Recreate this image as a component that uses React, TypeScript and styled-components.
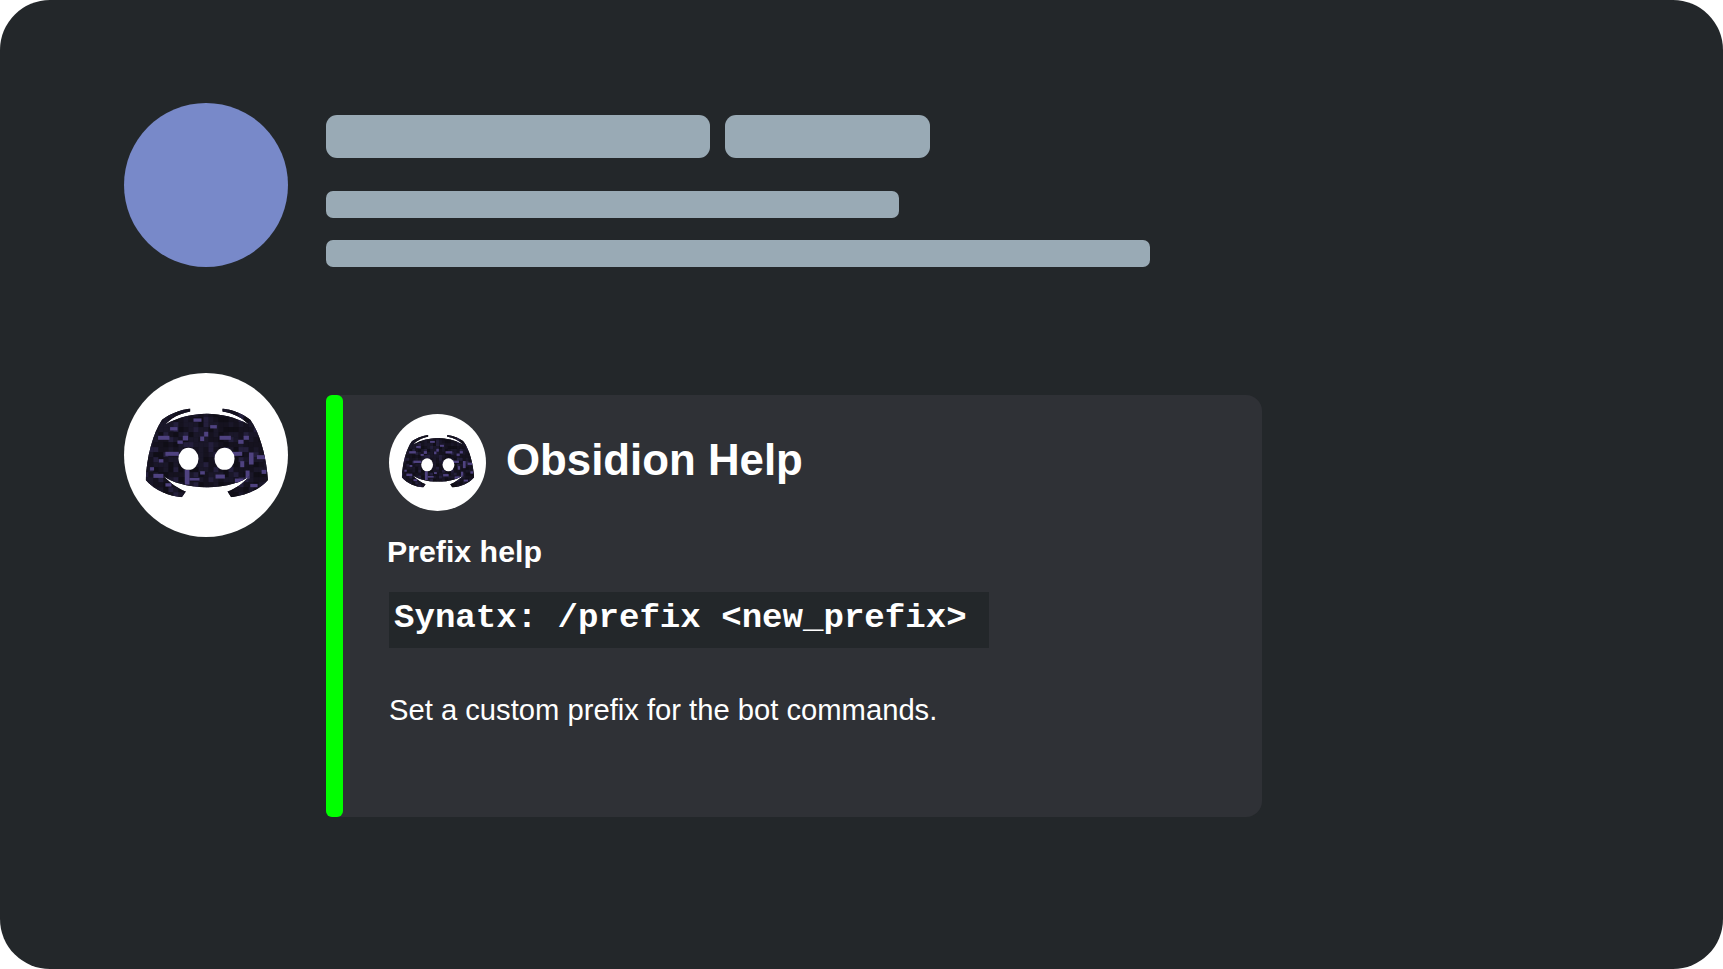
import React, { useId } from "react";
import styled, { createGlobalStyle } from "styled-components";

const GlobalStyle = createGlobalStyle`
  html, body {
    margin: 0;
    padding: 0;
    background: #ffffff;
  }
`;

const Page = styled.div`
  width: 1723px;
  height: 969px;
  box-sizing: border-box;
  padding: 103px 0 0 124px;
  background: #23272a;
  border-radius: 50px;
  font-family: "Liberation Sans", Arial, sans-serif;
  color: #ffffff;
  overflow: hidden;
`;

const Message = styled.div`
  display: flex;
  gap: 38px;
  margin-bottom: 106px;
`;

const Avatar = styled.div<{ $bg: string; $size: number }>`
  flex: none;
  width: ${(p) => p.$size}px;
  height: ${(p) => p.$size}px;
  border-radius: 50%;
  background: ${(p) => p.$bg};
  overflow: hidden;
`;

const Lines = styled.div`
  padding-top: 12px;
  display: flex;
  flex-direction: column;
`;

const NameRow = styled.div`
  display: flex;
  gap: 15px;
  margin-bottom: 33px;
`;

const Bar = styled.div<{ $w: number; $h: number; $r: number }>`
  width: ${(p) => p.$w}px;
  height: ${(p) => p.$h}px;
  border-radius: ${(p) => p.$r}px;
  background: #99aab5;
`;

const Gap = styled.div`
  height: 22px;
`;

const Embed = styled.div`
  display: flex;
  width: 936px;
  height: 422px;
  margin-top: 22px;
  background: #2f3136;
  border-radius: 6px 16px 16px 6px;
`;

const Stripe = styled.div`
  flex: none;
  width: 17px;
  background: #00ff00;
  border-radius: 6px;
`;

const EmbedBody = styled.div`
  flex: 1;
  padding: 19px 0 0 46px;
`;

const EmbedHead = styled.div`
  display: flex;
  align-items: center;
  gap: 20px;
`;

const Title = styled.div`
  font-size: 43.8px;
  font-weight: 700;
  line-height: 50px;
  margin-top: -6px;
`;

const Subtitle = styled.div`
  font-size: 30.3px;
  font-weight: 700;
  line-height: 36px;
  margin: 23px 0 0 -2px;
`;

const Code = styled.div`
  width: 600px;
  height: 56px;
  margin-top: 22px;
  padding-left: 5px;
  box-sizing: border-box;
  background: #23272a;
  font-family: "Liberation Mono", "Courier New", monospace;
  font-size: 34.1px;
  font-weight: 700;
  line-height: 52px;
  white-space: pre;
`;

const Description = styled.div`
  font-size: 29.2px;
  line-height: 36px;
  margin-top: 44px;
`;

// purple streaks of the obsidian texture, in the same units as the logo path
const streaks: [number, number, number, number][] = [
  [174, 256, 34, 12], [232, 270, 16, 10], [248, 256, 16, 14], [300, 258, 12, 14],
  [312, 244, 12, 14], [358, 256, 34, 12], [414, 268, 16, 12], [430, 256, 16, 12],
  [196, 304, 40, 12], [176, 326, 14, 10], [396, 304, 30, 12], [446, 306, 14, 36],
  [470, 314, 26, 12], [484, 358, 14, 12], [160, 370, 30, 12], [254, 358, 14, 44],
  [268, 382, 30, 8], [346, 372, 28, 12], [300, 362, 14, 10], [436, 360, 12, 24],
  [404, 384, 26, 12], [210, 230, 22, 10], [280, 204, 24, 10], [330, 224, 20, 10],
  [150, 350, 12, 10], [420, 332, 12, 18], [196, 398, 18, 10], [450, 400, 22, 10],
];

const noiseColors = ["#100e17", "#15121f", "#15121f", "#1a1729", "#1a1729", "#241f3c"];

// small fixed noise grid so the dark part of the obsidian is not flat
const noise: { x: number; y: number; c: string }[] = [];
let seed = 7;
for (let y = 170; y < 445; y += 15) {
  for (let x = 130; x < 510; x += 15) {
    seed = (seed * 16807) % 2147483647;
    noise.push({ x, y, c: noiseColors[seed % noiseColors.length] });
  }
}

const LOGO =
  "M270 174C240 178 205 192 186 208C158 250 140 320 137 388C165 420 205 435 245 440L257 423C235 415 210 398 188 375C215 395 260 410 320 410C380 410 425 395 450 375C430 398 405 415 382 423L393 440C435 435 475 420 503 388C498 320 480 250 450 208C432 192 400 178 367 174L367 183C400 188 428 203 445 222C405 200 360 190 320 190C280 190 235 200 196 222C212 203 235 190 270 183Z";

const ObsidianLogo = () => {
  const clip = useId();
  return (
    <svg width="100%" height="100%" viewBox="72 68 491 491" style={{ display: "block" }}>
      <clipPath id={clip}>
        <path d={LOGO} />
      </clipPath>
      <g clipPath={`url(#${clip})`}>
        <rect x="120" y="160" width="400" height="300" fill="#15121f" />
        {noise.map((n) => (
          <rect key={`${n.x}-${n.y}`} x={n.x} y={n.y} width="16" height="16" fill={n.c} />
        ))}
        {streaks.map(([x, y, w, h]) => (
          <rect key={`${x}-${y}`} x={x} y={y} width={w} height={h} fill="#4f4280" />
        ))}
      </g>
      <ellipse cx="265" cy="325" rx="30" ry="33" fill="#fff" />
      <ellipse cx="373" cy="325" rx="30" ry="33" fill="#fff" />
    </svg>
  );
};

export default function App() {
  return (
    <Page>
      <GlobalStyle />
      <Message>
        <Avatar $bg="#7889c9" $size={164} />
        <Lines>
          <NameRow>
            <Bar $w={384} $h={43} $r={11} />
            <Bar $w={205} $h={43} $r={11} />
          </NameRow>
          <Bar $w={573} $h={27} $r={7} />
          <Gap />
          <Bar $w={824} $h={27} $r={7} />
        </Lines>
      </Message>
      <Message>
        <Avatar $bg="#ffffff" $size={164}>
          <ObsidianLogo />
        </Avatar>
        <Embed>
          <Stripe />
          <EmbedBody>
            <EmbedHead>
              <Avatar $bg="#ffffff" $size={97}>
                <ObsidianLogo />
              </Avatar>
              <Title>Obsidion Help</Title>
            </EmbedHead>
            <Subtitle>Prefix help</Subtitle>
            <Code>{"Synatx: /prefix <new_prefix>"}</Code>
            <Description>Set a custom prefix for the bot commands.</Description>
          </EmbedBody>
        </Embed>
      </Message>
    </Page>
  );
}
